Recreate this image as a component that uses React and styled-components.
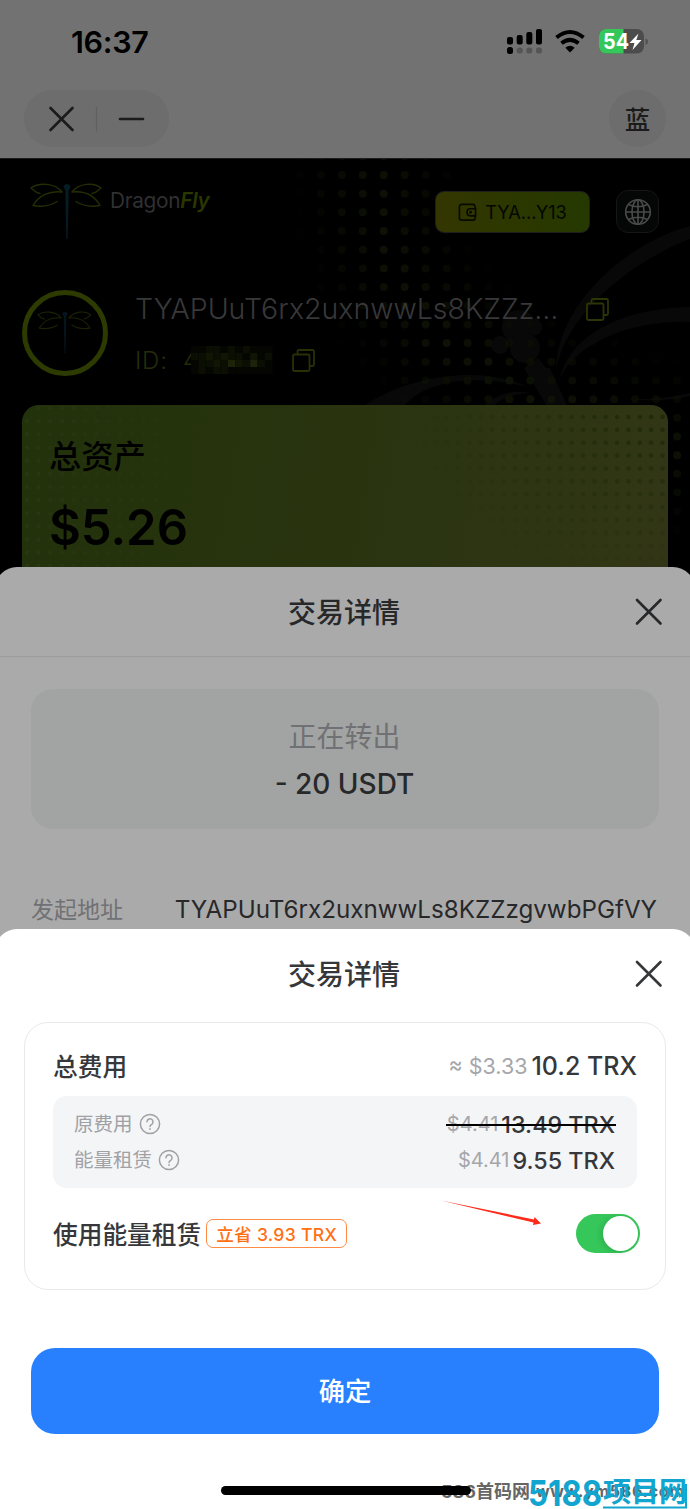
import React from 'react';
import styled, { createGlobalStyle } from 'styled-components';

const GlobalStyle = createGlobalStyle`
    * {
        box-sizing: border-box;
    }

    body {
        margin: 0;
        background: #ffffff;
        font-family: Inter, 'Noto Sans CJK SC', sans-serif;
    }
`;

const Screen = styled.div`
    position: relative;
    display: flex;
    flex-direction: column;
    width: 690px;
    height: 1509px;
    overflow: hidden;
    background: #ffffff;
`;

// Top bars
const TopArea = styled.header`
    flex: none;
    height: 158px;
    background: #727272;
`;

const StatusBar = styled.div`
    display: flex;
    align-items: center;
    height: 84px;
    padding: 0 41px 0 71px;
`;

const Clock = styled.div`
    flex: 1;
    margin-top: -2px;
    font-size: 30.5px;
    font-weight: 600;
    letter-spacing: -0.3px;
    color: #000000;
`;

const StatusIcons = styled.svg`
    display: block;
    width: 144px;
    height: 30px;
`;

const MiniAppBar = styled.div`
    display: flex;
    justify-content: space-between;
    padding: 6px 24px 0;
`;

const Capsule = styled.div`
    display: flex;
    align-items: center;
    width: 145px;
    height: 57px;
    border-radius: 29px;
    background: #6d6d6d;
`;

const AppBadge = styled.div`
    display: flex;
    align-items: center;
    justify-content: center;
    width: 57px;
    height: 57px;
    padding-bottom: 3px;
    border-radius: 50%;
    background: #6d6d6d;
    color: #1b1b1b;
    font-size: 25.5px;
    font-weight: 500;
`;

// Wallet page behind the sheets
const Hero = styled.section`
    position: relative;
    flex: none;
    height: 429px;
    padding: 22px 22px 0;
    background: #000000;
    border-top: 1px solid #1c1c1c;
    overflow: hidden;
`;

const HeroBackdrop = styled.svg`
    position: absolute;
    left: 0;
    top: 0;
`;

const HeroContent = styled.div`
    position: relative;
`;

const BrandRow = styled.div`
    display: flex;
    align-items: flex-start;
    height: 109px;
`;

const BrandName = styled.div`
    flex: 1;
    padding: 7px 0 0 6px;
    font-size: 20.8px;
    line-height: 25px;
    letter-spacing: -0.3px;
    color: #303032;

    em {
        font-weight: 600;
        color: #2a3800;
    }
`;

const WalletButton = styled.div`
    display: flex;
    align-items: center;
    justify-content: center;
    gap: 8px;
    width: 155px;
    height: 42px;
    margin-top: 10px;
    border: 1px solid #1d1d22;
    border-radius: 9px;
    background: linear-gradient(80deg, #343600, #243900);
    color: #050600;
    font-size: 18.2px;
`;

const GlobeButton = styled.div`
    display: flex;
    align-items: center;
    justify-content: center;
    width: 43px;
    height: 43px;
    margin: 9px 9px 0 26px;
    border: 1px solid #15151a;
    border-radius: 12px;
    background: #050606;
`;

const Profile = styled.div`
    display: flex;
    height: 115px;
`;

const Avatar = styled.div`
    display: flex;
    align-items: center;
    justify-content: center;
    width: 86px;
    height: 86px;
    border: 5px solid #2d3a00;
    border-radius: 50%;
`;

const ProfileInfo = styled.div`
    padding-left: 26px;
`;

const ProfileLine = styled.div`
    display: flex;
    align-items: center;
    height: ${({ $height }) => $height}px;
`;

const Address = styled.div`
    width: 452px;
    padding: 0 0 2px 1px;
    font-size: 28.5px;
    font-weight: 300;
    color: #38383a;
    white-space: nowrap;
`;

const UserId = styled.div`
    display: flex;
    justify-content: space-between;
    width: 65px;
    padding-left: 1px;
    font-size: 24px;
    font-weight: 300;
    letter-spacing: 0.8px;
    color: #242d09;
    white-space: nowrap;
`;

const Mosaic = styled.svg`
    margin-left: -13px;
`;

const AssetCard = styled.div`
    position: relative;
    height: 170px;
    padding: 29px 28px;
    border-radius: 17px 17px 0 0;
    background: linear-gradient(100deg, #22320b, #29340f 50%, #323616);
    overflow: hidden;
    color: #000000;
`;

const CardDots = styled.svg`
    position: absolute;
    left: 0;
    top: 0;
`;

const AssetLabel = styled.div`
    position: relative;
    margin-left: -1px;
    font-size: 32.3px;
    line-height: 46px;
    font-weight: 500;
`;

const AssetValue = styled.div`
    position: relative;
    margin: 18px 0 0 -1px;
    font-size: 49px;
    line-height: 60px;
    font-weight: 600;
`;

// Sheets are a little wider than the screen, so their corners run off its edges
const Sheet = styled.section`
    position: relative;
    flex: none;
    height: ${({ $height }) => $height}px;
    margin: -20px -5px 0;
    padding: 0 5px;
    border-radius: 22px 22px 0 0;
    background: ${({ $dimmed }) => ($dimmed ? '#aaaaaa' : '#ffffff')};
    color: ${({ $dimmed }) => ($dimmed ? '#27282a' : '#36373a')};
`;

const SheetHeader = styled.div`
    display: grid;
    grid-template-columns: 1fr auto 1fr;
    align-items: center;
    height: 90px;
    padding: 0 27px;
    border-bottom: 1px solid ${({ $line }) => $line || 'transparent'};
`;

const SheetTitle = styled.h2`
    grid-column: 2;
    margin: 0;
    padding: 3px 2px 0 0;
    font-size: 28px;
    font-weight: 500;
    line-height: 40px;
`;

const CloseIcon = styled.svg`
    justify-self: end;
    display: block;
`;

const TransferBox = styled.div`
    display: flex;
    flex-direction: column;
    align-items: center;
    height: 140px;
    margin: 32px 31px 0;
    padding: 28px 1px 0 0;
    border-radius: 22px;
    background: #a2a4a3;
`;

const TransferState = styled.div`
    font-size: 28px;
    line-height: 40px;
    color: #707174;
`;

const TransferAmount = styled.div`
    margin-top: 7px;
    font-size: 28px;
    line-height: 40px;
    font-weight: 500;
`;

const FromRow = styled.div`
    display: flex;
    justify-content: space-between;
    align-items: center;
    height: 40px;
    margin: 60px 33px 0 31px;
    font-size: 24.2px;
`;

const FromLabel = styled.span`
    padding-bottom: 3px;
    font-size: 23px;
    color: #707174;
`;

const FeeCard = styled.div`
    height: 268px;
    margin: 3px 24px 0;
    padding: 21px 28px 0;
    border: 1px solid #e9e9ea;
    border-radius: 24px;
`;

const FeeRow = styled.div`
    display: flex;
    justify-content: space-between;
    align-items: center;
    height: ${({ $height }) => $height}px;
`;

const FeeLabel = styled.div`
    padding-bottom: 1px;
    font-size: 24.7px;
    font-weight: 500;
`;

const FeeValue = styled.div`
    display: flex;
    align-items: center;
    gap: ${({ $gap }) => $gap}px;
    font-size: ${({ $size }) => $size}px;
    font-weight: 500;
`;

const Muted = styled.span`
    font-size: ${({ $size }) => $size}px;
    font-weight: 400;
    color: #a5a6aa;
`;

const FeeDetails = styled.div`
    height: 92px;
    margin-top: 9px;
    padding: 10px 22px 10px 21px;
    border-radius: 14px;
    background: #f4f5f7;
`;

const DetailLabel = styled.div`
    display: flex;
    align-items: center;
    gap: 6px;
    font-size: 19.5px;
    line-height: 28px;
    color: #a0a1a5;
`;

const Struck = styled(FeeValue)`
    position: relative;

    &::after {
        content: '';
        position: absolute;
        left: -1px;
        right: -1px;
        top: 50%;
        height: 2px;
        background: #000000;
    }
`;

const RentRow = styled.div`
    position: relative;
    display: flex;
    align-items: center;
    height: 40px;
    margin: 25px -3px 0 0;
`;

const SaveTag = styled.span`
    display: flex;
    align-items: center;
    justify-content: center;
    width: 141px;
    height: 29px;
    margin: 1px 0 0 5px;
    border: 1.5px solid #ff8b44;
    border-radius: 7px;
    color: #ff6f14;
    font-size: 17.6px;
    font-weight: 500;
    letter-spacing: 0.3px;
`;

const Toggle = styled.div`
    display: flex;
    justify-content: flex-end;
    align-items: center;
    width: 64px;
    height: 39px;
    margin-left: auto;
    padding-right: 2px;
    border-radius: 20px;
    background: #35c759;
`;

const ToggleKnob = styled.div`
    width: 35px;
    height: 35px;
    border-radius: 50%;
    background: #ffffff;
    box-shadow: -2px 1px 6px rgba(0, 0, 0, 0.14);
`;

const PointerArrow = styled.svg`
    position: absolute;
    left: 387px;
    top: -14px;
`;

const ConfirmButton = styled.button`
    display: block;
    width: 628px;
    height: 86px;
    margin: 58px auto 0;
    padding: 0 0 3px;
    border: none;
    border-radius: 24px;
    background: #2880ff;
    color: #ffffff;
    font-family: inherit;
    font-size: 26.3px;
    font-weight: 500;
`;

const HomeIndicator = styled.div`
    position: absolute;
    left: 221px;
    bottom: 14px;
    width: 250px;
    height: 9px;
    border-radius: 5px;
    background: #000000;
`;

const SiteMark = styled.svg`
    position: absolute;
    left: 430px;
    bottom: 0;
`;

const Dragonfly = ({ width, height, wing = '#242e04', body = '#061c24' }) => (
    <svg width={width} height={height} viewBox="0 0 74 58" fill="none">
        <g stroke={wing} strokeWidth="1.5" strokeLinecap="round" strokeLinejoin="round">
            <path d="M32 9C25 0 9 -1 1 5c3 2 4 5 9 5.500" />
            <path d="M31 9C20 8 9 12 3 22.500c9 1.500 18 0 24-4" />
            <path d="M42 9C49 0 64 -1 71 5c-3 2-4 5-9 5.500" />
            <path d="M43 9c11-1 21 3 27 13.500-9 1.500-18 0-24-4" />
        </g>
        <path d="M33.5 3.5C35 0 39 0 40.500 3.500L38.500 8v10L37.600 56h-1.200L35.500 18V8z" fill={body} />
    </svg>
);

const CopyIcon = ({ color }) => (
    <svg width="23" height="23" viewBox="0 0 23 23" fill="none" stroke={color} strokeWidth="1.8">
        <rect x="1" y="5.500" width="16.500" height="16.500" rx="1.500" />
        <path d="M5.500 5.500V2.500Q5.500 1 7 1H20.500Q22 1 22 2.500V15.500Q22 17 20.500 17H17.500" />
    </svg>
);

const Close = ({ color }) => (
    <CloseIcon width="29" height="29" viewBox="0 0 29 29">
        <path d="M3 3 26.500 26.500M26.500 3 3 26.500" stroke={color} strokeWidth="2.6" strokeLinecap="round" />
    </CloseIcon>
);

const HelpIcon = () => (
    <svg width="22" height="22" viewBox="0 0 22 22" fill="none" stroke="#a0a1a5" strokeWidth="1.5">
        <circle cx="11" cy="11" r="9.600" />
        <path d="M8 8.800a3 3 0 1 1 4.700 2.500Q11 12.300 11 13.500" strokeLinecap="round" />
        <circle cx="11" cy="16" r="0.600" fill="#a0a1a5" strokeWidth="0.700" />
    </svg>
);

// Centre line of the glowing dot band behind the profile
const band = [[376, 0], [380, 60], [402, 130], [448, 185], [530, 235], [610, 262], [690, 295]];

const distanceToBand = (x, y) => {
    let best = Infinity;
    for (let i = 0; i < band.length - 1; i++) {
        const [ax, ay] = band[i];
        const [bx, by] = band[i + 1];
        const dx = bx - ax;
        const dy = by - ay;
        const t = Math.max(0, Math.min(1, ((x - ax) * dx + (y - ay) * dy) / (dx * dx + dy * dy)));
        best = Math.min(best, Math.hypot(x - ax - t * dx, y - ay - t * dy));
    }
    return best;
};

const heroDots = [];
for (let row = 0; row < 22; row++) {
    for (let col = 0; col < 20; col++) {
        const x = 279 + col * 20.95;
        const y = -2.7 + row * 18.68;
        const opacity = 1 - distanceToBand(x, y) / 86;
        if (opacity > 0.05) {
            heroDots.push({ x, y, opacity });
        }
    }
}

const cardDots = [];
for (let row = 0; row < 13; row++) {
    for (let col = 0; col < 28; col++) {
        const left = { x: 5 + col * 11.65, y: 3 + row * 13.15, opacity: 0.6 - col / 28, color: '#2c3a17' };
        const right = {
            x: 640.5 - col * 11.35,
            y: 12 + row * 12.87,
            opacity: 1 - Math.hypot(col / 22, row / 13),
            color: '#202b0b',
        };
        [left, right].forEach((dot) => dot.opacity > 0.03 && cardDots.push(dot));
    }
}

const Dots = ({ items, radius, color }) =>
    items.map((dot, index) => (
        <circle key={index} cx={dot.x} cy={dot.y} r={radius} fill={dot.color || color} opacity={dot.opacity} />
    ));

// The blurred-out user id, one number per cell: 0 is dark, 3 is bright
const mosaic = ['00110101000', '11212110201', '01121321310', '01011000000'];
const mosaicColors = ['#050601', '#0b0e03', '#111504', '#1c2308'];

const App = () => (
    <Screen>
        <GlobalStyle />
        <TopArea>
            <StatusBar>
                <Clock>16:37</Clock>
                <StatusIcons viewBox="0 0 144 30">
                    <rect x="2" y="10" width="6" height="7.500" rx="2" />
                    <rect x="11.700" y="8" width="6" height="9.500" rx="2" />
                    <rect x="21.300" y="5" width="6" height="12.500" rx="2" />
                    <rect x="31" y="2" width="6" height="15.500" rx="2" />
                    <rect x="2" y="20" width="6" height="7" rx="2.500" />
                    <g fill="#555555">
                        <rect x="11.700" y="20.500" width="6" height="6" rx="2.500" />
                        <rect x="21.300" y="20.500" width="6" height="6" rx="2.500" />
                        <rect x="31" y="20.500" width="6" height="6" rx="2.500" />
                    </g>
                    <g fill="none" stroke="#000000" strokeWidth="4">
                        <path d="M51.500 10.500Q65 -0.500 78.500 10.500" />
                        <path d="M56.500 16.200Q65 9.500 73.500 16.200" />
                    </g>
                    <path d="M60.300 20.700Q65 17 69.700 20.700L65 25.500z" />
                    <clipPath id="battery">
                        <rect x="94" y="2" width="45" height="24.500" rx="7" />
                    </clipPath>
                    <g clipPath="url(#battery)">
                        <rect x="94" y="2" width="45" height="25" fill="#4c4c4c" />
                        <rect x="94" y="2" width="24.500" height="25" fill="#35c759" />
                    </g>
                    <path d="M140.500 11.500Q143 12 143 14.500T140.500 18z" fill="#505050" />
                    <text
                        x="98"
                        y="22"
                        fontSize="22"
                        fontWeight="700"
                        fill="#ffffff"
                        textLength="26"
                        lengthAdjust="spacingAndGlyphs"
                    >
                        54
                    </text>
                    <path d="M133.500 6.500 124.500 16h5L127.500 23 136.500 13h-5.200z" fill="#ffffff" />
                </StatusIcons>
            </StatusBar>
            <MiniAppBar>
                <Capsule>
                    <svg width="145" height="57" viewBox="0 0 145 57" strokeLinecap="round">
                        <path d="M26.500 18 48.500 40M48.500 18 26.500 40" stroke="#1b1b1b" strokeWidth="2.600" />
                        <path d="M72.500 17V41" stroke="#606060" strokeWidth="1.200" />
                        <path d="M96 29H119" stroke="#1b1b1b" strokeWidth="2.600" />
                    </svg>
                </Capsule>
                <AppBadge>蓝</AppBadge>
            </MiniAppBar>
        </TopArea>

        <Hero>
            <HeroBackdrop width="690" height="429" viewBox="0 0 690 429">
                <g fill="#080808" transform="translate(0 -159)">
                    <path d="M556 370C556 310 620 245 690 226V239C625 264 565 318 556 370z" />
                    <path d="M560 378C572 330 630 308 690 307V322C640 320 580 338 560 378z" />
                    <path d="M365 405C420 370 490 368 527 387C480 375 430 378 405 405z" />
                    <path d="M484 405C500 392 514 390 529 393C514 394 504 398 494 405z" />
                    <path d="M625 399Q660 400 690 393V396Q660 403 625 399z" />
                    <circle cx="519" cy="327" r="17" />
                    <circle cx="533" cy="327" r="9" />
                    <circle cx="500" cy="345" r="9" />
                    <circle cx="525" cy="348" r="15" />
                    <path d="M524 368 538 358 546 368H550L567 405H546z" />
                </g>
                <Dots items={heroDots} radius={4} color="#0e1105" />
            </HeroBackdrop>
            <HeroContent>
                <BrandRow>
                    <svg width="82" height="60" viewBox="0 0 82 60">
                        <g transform="translate(8 2)">
                            <Dragonfly width="74" height="58" />
                        </g>
                    </svg>
                    <BrandName>
                        Dragon<em>Fly</em>
                    </BrandName>
                    <WalletButton>
                        <svg width="19" height="19" viewBox="0 0 20 20" fill="none" stroke="#080a00" strokeWidth="1.700">
                            <path d="M18 5.500V4Q18 1.500 15.500 1.500H4Q1.500 1.500 1.500 4v12Q1.500 18 4 18H16Q18 18 18 16V13.500" />
                            <path d="M18.500 6H13Q9.500 6 9.500 9.700T13 13.500h5.500z" />
                            <circle cx="13.200" cy="9.700" r="0.700" />
                        </svg>
                        TYA...Y13
                    </WalletButton>
                    <GlobeButton>
                        <svg width="28" height="28" viewBox="0 0 28 28" fill="none" stroke="#4a4a4a" strokeWidth="1.600">
                            <circle cx="14" cy="14" r="12.300" />
                            <ellipse cx="14" cy="14" rx="6" ry="12.300" />
                            <path d="M14 1.700V26.300M1.700 14H26.300M4.500 6.500Q14 11 23.500 6.500M4.500 21.500Q14 17 23.500 21.500" />
                        </svg>
                    </GlobeButton>
                </BrandRow>
                <Profile>
                    <Avatar>
                        <Dragonfly width="56" height="44" wing="#1a2206" body="#06151d" />
                    </Avatar>
                    <ProfileInfo>
                        <ProfileLine $height={38}>
                            <Address>TYAPUuT6rx2uxnwwLs8KZZz…</Address>
                            <CopyIcon color="#2b3605" />
                        </ProfileLine>
                        <ProfileLine $height={64}>
                            <UserId>
                                <span>ID:</span>
                                <span>4</span>
                            </UserId>
                            <Mosaic width="106" height="30" viewBox="0 0 106 30">
                                {mosaic.map((cells, row) =>
                                    [...cells].map((level, col) => (
                                        <rect
                                            key={`${row}-${col}`}
                                            x={5 + col * 7.400}
                                            y={1 + row * 7}
                                            width="7.400"
                                            height="7"
                                            fill={mosaicColors[level]}
                                        />
                                    ))
                                )}
                            </Mosaic>
                            <CopyIcon color="#283106" />
                        </ProfileLine>
                    </ProfileInfo>
                </Profile>
                <AssetCard>
                    <CardDots width="646" height="170" viewBox="0 0 646 170">
                        <Dots items={cardDots} radius={2.300} />
                    </CardDots>
                    <AssetLabel>总资产</AssetLabel>
                    <AssetValue>$5.26</AssetValue>
                </AssetCard>
            </HeroContent>
        </Hero>

        <Sheet $dimmed $height={382}>
            <SheetHeader $line="#9c9c9d">
                <SheetTitle>交易详情</SheetTitle>
                <Close color="#27282a" />
            </SheetHeader>
            <TransferBox>
                <TransferState>正在转出</TransferState>
                <TransferAmount>- 20 USDT</TransferAmount>
            </TransferBox>
            <FromRow>
                <FromLabel>发起地址</FromLabel>
                <span>TYAPUuT6rx2uxnwwLs8KZZzgvwbPGfVY</span>
            </FromRow>
        </Sheet>

        <Sheet $height={580}>
            <SheetHeader>
                <SheetTitle>交易详情</SheetTitle>
                <Close color="#36373a" />
            </SheetHeader>
            <FeeCard>
                <FeeRow $height={43}>
                    <FeeLabel>总费用</FeeLabel>
                    <FeeValue $size={25} $gap={4}>
                        <Muted $size={21.5}>≈ $3.33</Muted>
                        10.2 TRX
                    </FeeValue>
                </FeeRow>
                <FeeDetails>
                    <FeeRow $height={36}>
                        <DetailLabel>
                            原费用
                            <HelpIcon />
                        </DetailLabel>
                        <Struck $size={23.3} $gap={3}>
                            <Muted $size={20}>$4.41</Muted>
                            13.49 TRX
                        </Struck>
                    </FeeRow>
                    <FeeRow $height={36}>
                        <DetailLabel>
                            能量租赁
                            <HelpIcon />
                        </DetailLabel>
                        <FeeValue $size={23.3} $gap={3}>
                            <Muted $size={20}>$4.41</Muted>
                            9.55 TRX
                        </FeeValue>
                    </FeeRow>
                </FeeDetails>
                <RentRow>
                    <FeeLabel>使用能量租赁</FeeLabel>
                    <SaveTag>立省 3.93 TRX</SaveTag>
                    <Toggle>
                        <ToggleKnob />
                    </Toggle>
                    <PointerArrow width="104" height="30" viewBox="0 0 104 30">
                        <path d="M1 1.500 94 20.500 94.500 18 101 24.500 93 26 93.500 23.500z" fill="#ff2a1a" />
                    </PointerArrow>
                </RentRow>
            </FeeCard>
            <ConfirmButton>确定</ConfirmButton>
        </Sheet>

        <SiteMark width="260" height="34" viewBox="0 0 260 34">
            <g fontSize="18" fontWeight="700" fill="#666666">
                <text x="11" y="23" textLength="89">586首码网</text>
                <text x="106" y="22" fontSize="16" textLength="148">www.ym586.com</text>
            </g>
            <g fill="#12a5cf" fontWeight="700">
                <text x="98" y="31" fontSize="36" textLength="74" lengthAdjust="spacingAndGlyphs">
                    5188
                </text>
                <text x="173" y="27" fontSize="28" textLength="84">项目网</text>
            </g>
            <path d="M173 32.500H256V9" fill="none" stroke="#12a5cf" strokeWidth="2" />
        </SiteMark>
        <HomeIndicator />
    </Screen>
);

export default App;
